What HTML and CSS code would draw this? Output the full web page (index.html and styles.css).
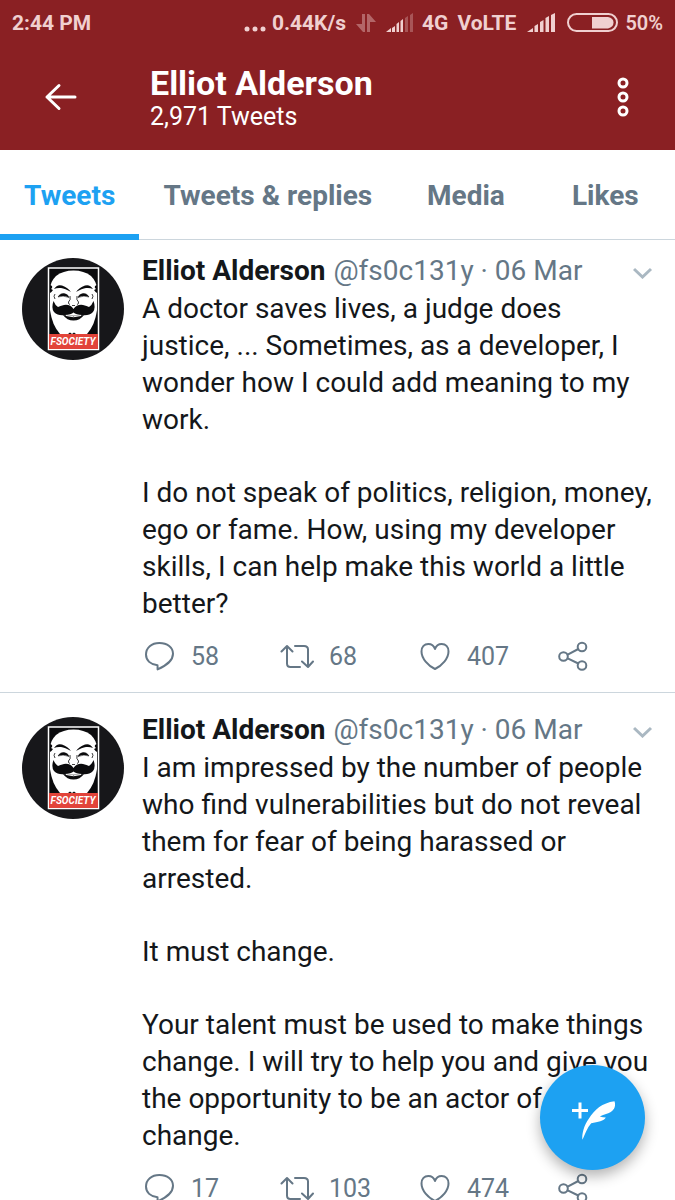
FILE: index.html
```html
<!DOCTYPE html>
<html lang="en">
<head>
    <meta charset="UTF-8">
    <meta name="viewport" content="width=device-width, initial-scale=1.0">
    <title>Elliot Alderson - Tweets</title>
    <link rel="stylesheet" href="styles.css">
</head>
<body>
    <!-- Shared icons -->
    <svg class="sprite" aria-hidden="true">
        <symbol id="icon-reply" viewBox="0 0 34 30">
            <path d="M15.5 24.2C8.5 23.6 4 19.500 4 13.600C4 6.800 9.500 2 17.400 2C25.300 2 31 6.600 31 12.800C31 20.300 24 24.600 15.600 28.400Z"/>
        </symbol>
        <symbol id="icon-retweet" viewBox="0 0 34 30">
            <path d="M1.500 10.500L7 5L12.500 10.500M7 5.500V22.500Q7 26 10.500 26H20M15 5H24Q28 5 28 8.500V25.500M22 20.500L28 26L33 20.500"/>
        </symbol>
        <symbol id="icon-like" viewBox="0 0 34 30">
            <path d="M17 28C10 24.500 3.500 17.500 3.500 10.500C3.500 5.800 6.500 3 10.300 3C13.500 3 16 5 17 8C18 5 20.500 3 23.700 3C27.500 3 30.500 5.800 30.500 10.500C30.500 17.500 24 24.500 17 28Z"/>
        </symbol>
        <symbol id="icon-share" viewBox="0 0 34 30">
            <path d="M11.700 13.700L22.300 8M11.700 17.300L22.300 22.500"/>
            <circle cx="7.500" cy="15.500" r="4.300"/>
            <circle cx="26" cy="6" r="4.300"/>
            <circle cx="26" cy="24.500" r="4.300"/>
        </symbol>
        <symbol id="icon-chevron" viewBox="0 0 20 14">
            <path d="M1 4L9.500 12L18 4"/>
        </symbol>
        <symbol id="mask" viewBox="0 0 102 102">
            <circle cx="51" cy="51" r="51" fill="#17171a"/>
            <rect x="26.500" y="10" width="50" height="81.500" fill="#0b0b0d" stroke="#fff" stroke-width="1.500"/>
            <path d="M28 37V30Q29 23 34 18Q41 12.500 51.500 12.500Q62 12.500 69 18Q74 23 75 30V52Q73 67 65 76H38Q30 67 28 52Z" fill="#fff"/>
            <path d="M28 27Q31 28 30 30Q28 31 31 32Q29 35 28 35ZM75 27Q72 28 73 30Q75 31 72 32Q74 35 75 35Z" fill="#0b0b0d"/>
            <path d="M32 31Q35 26 40 27.500Q46 29.500 49 34Q43 30.500 39 30Q35 29.500 32 31ZM71 31Q68 26 63 27.500Q57 29.500 54 34Q60 30.500 64 30Q68 29.500 71 31Z" fill="#0b0b0d"/>
            <path d="M36 39Q38 35 42 35.500Q46 36 47 39.500Q41 37 36 39ZM67 39Q65 35 61 35.500Q57 36 56 39.500Q62 37 67 39Z" fill="#0b0b0d" stroke="#0b0b0d" stroke-width="0.500"/>
            <path d="M48 38Q49 42 46.500 44Q46 46 48 46.500M55 38Q54 42 56.500 44Q57 46 55 46.500M33 36Q31 38 33 41M70 36Q72 38 70 41M50 47.500H53" fill="none" stroke="#0b0b0d" stroke-width="0.800"/>
            <path d="M51.500 51Q48 46 42 47Q38 48 36 49Q33 47 31.500 43Q29 50 32 54Q36 58 43 57Q49 56.500 51.500 54.500Q54 56.500 60 57Q67 58 71 54Q74 50 71.500 43Q70 47 67 49Q65 48 61 47Q55 46 51.500 51Z" fill="#0b0b0d"/>
            <path d="M41 57Q51.500 58.500 62 57Q58 62.500 51.500 62.500Q45 62.500 41 57Z" fill="#0b0b0d"/>
            <path d="M44 57.500Q51.500 60 59 57.500" fill="none" stroke="#fff"/>
            <path d="M46 76L48 74.500L50 76L52 74.500L54 76Z" fill="#0b0b0d"/>
            <rect x="27" y="76" width="49" height="15" fill="#e2443a"/>
        </symbol>
    </svg>

    <div class="app">
        <header class="topbar">
            <div class="status">
                <span class="clock">2:44 PM</span>
                <svg width="22" height="6" viewBox="0 0 22 6" class="dots"><circle cx="3" cy="3" r="2.500"/><circle cx="11" cy="3" r="2.500"/><circle cx="19" cy="3" r="2.500"/></svg>
                <span class="speed">0.44K/s</span>
                <svg width="20" height="20" viewBox="0 0 20 20" class="data"><path d="M6 1H9V19H7L0 11H6ZM11 1H13L20 9H14V19H11Z"/></svg>
                <svg width="28" height="20" viewBox="0 0 28 20" class="signal"><path d="M0 19L5 15V19ZM6 15L9 13V19H6ZM10.500 11L13 9V19H10.500ZM14.500 8L17 6V19H14.500Z"/><path class="off" d="M19 5L22 3V19H19ZM24 2L27 0V19H24Z"/></svg>
                <span>4G</span>
                <span class="volte">VoLTE</span>
                <svg width="28" height="20" viewBox="0 0 28 20" class="signal full"><path d="M0 19L6 15V19ZM7.500 13L11 11V19H7.500ZM13 9L16.500 7V19H13ZM18.500 5L22 3V19H18.500ZM24 2L28 0V19H24Z"/></svg>
                <svg width="51" height="20" viewBox="0 0 51 20" class="battery"><rect x="1" y="1" width="49" height="17" rx="8.500"/><path d="M25 4H41Q46.500 5 46.500 9.500Q46.500 14 41 15.500H25Z"/></svg>
                <span class="percent">50%</span>
            </div>
            <div class="profile">
                <button type="button" class="back" aria-label="Back">
                    <svg width="34" height="28" viewBox="0 0 34 28"><path d="M15 2.500L3 14L15 25.500M3 14H31"/></svg>
                </button>
                <div class="profile-text">
                    <h1>Elliot Alderson</h1>
                    <p>2,971 Tweets</p>
                </div>
                <button type="button" class="more" aria-label="More options">
                    <svg width="12" height="40" viewBox="0 0 12 40"><circle cx="6" cy="6" r="4"/><circle cx="6" cy="20" r="4"/><circle cx="6" cy="34" r="4"/></svg>
                </button>
            </div>
        </header>

        <nav class="tabs">
            <a href="#tweets" class="active">Tweets</a>
            <a href="#replies">Tweets &amp; replies</a>
            <a href="#media">Media</a>
            <a href="#likes">Likes</a>
        </nav>

        <main class="feed">
            <article class="tweet">
                <svg class="avatar">
                    <use href="#mask"/>
                    <text x="51" y="87" text-anchor="middle">FSOCIETY</text>
                </svg>
                <div class="content">
                    <div class="byline">
                        <h2>Elliot Alderson</h2>
                        <span>@fs0c131y · 06 Mar</span>
                        <button type="button" class="menu" aria-label="Tweet menu"><svg><use href="#icon-chevron"/></svg></button>
                    </div>
                    <div class="text">
                        <p>A doctor saves lives, a judge does justice, ... Sometimes, as a developer, I wonder how I could add meaning to my work.</p>
                        <p>I do not speak of politics, religion, money, ego or fame. How, using my developer skills, I can help make this world a little better?</p>
                    </div>
                    <div class="actions">
                        <button type="button" aria-label="Reply"><svg><use href="#icon-reply"/></svg>58</button>
                        <button type="button" aria-label="Retweet"><svg><use href="#icon-retweet"/></svg>68</button>
                        <button type="button" aria-label="Like"><svg><use href="#icon-like"/></svg>407</button>
                        <button type="button" aria-label="Share"><svg><use href="#icon-share"/></svg></button>
                    </div>
                </div>
            </article>

            <article class="tweet">
                <svg class="avatar">
                    <use href="#mask"/>
                    <text x="51" y="87" text-anchor="middle">FSOCIETY</text>
                </svg>
                <div class="content">
                    <div class="byline">
                        <h2>Elliot Alderson</h2>
                        <span>@fs0c131y · 06 Mar</span>
                        <button type="button" class="menu" aria-label="Tweet menu"><svg><use href="#icon-chevron"/></svg></button>
                    </div>
                    <div class="text">
                        <p>I am impressed by the number of people who find vulnerabilities but do not reveal them for fear of being harassed or arrested.</p>
                        <p>It must change.</p>
                        <p>Your talent must be used to make things change. I will try to help you and give you the opportunity to be an actor of<br>change.</p>
                    </div>
                    <div class="actions">
                        <button type="button" aria-label="Reply"><svg><use href="#icon-reply"/></svg>17</button>
                        <button type="button" aria-label="Retweet"><svg><use href="#icon-retweet"/></svg>103</button>
                        <button type="button" aria-label="Like"><svg><use href="#icon-like"/></svg>474</button>
                        <button type="button" aria-label="Share"><svg><use href="#icon-share"/></svg></button>
                    </div>
                </div>
            </article>
        </main>

        <button type="button" class="compose" aria-label="Compose tweet">
            <svg width="46" height="46" viewBox="0 0 46 46">
                <path d="M2 15.500H18M10 7.500V23.500" class="plus"/>
                <path d="M12.500 44.800C11.500 40 14 30 18.800 23.800C25 14 32 8 44.500 6.200C45.500 9 45 12 44 13.800C42 17 39 18 36 19Q32 20 29.800 21.500Q33 22.500 35.800 22.500C34 26 28 27 21.200 28.200C17 33 15 39 12.500 44.800Z" class="feather"/>
            </svg>
        </button>
    </div>
</body>
</html>
```
FILE: styles.css
```css
* {
    box-sizing: border-box;
}
body {
    margin: 0;
    font-family: Roboto, "Liberation Sans", sans-serif;
    background: #fff;
    color: #14171a;
}
h1, h2, p {
    margin: 0;
}
button {
    padding: 0;
    border: none;
    background: none;
    font: inherit;
    color: inherit;
    cursor: pointer;
}
svg {
    display: block;
    flex-shrink: 0;
}
.sprite {
    position: absolute;
    width: 0;
    height: 0;
}
.app {
    height: 100vh;
    overflow: hidden;
}

/* Status bar and profile header */
.topbar {
    height: 150px;
    background: #8a2023;
    color: #fff;
}
.status {
    display: flex;
    align-items: center;
    height: 46px;
    padding: 0 12px;
    font-size: 21px;
    font-weight: bold;
    color: #f0d0d0;
    fill: #f0d0d0;
}
.clock {
    margin-right: auto;
}
.dots {
    margin: 12px 6px 0 0;
}
.speed {
    margin-right: 10px;
}
.data {
    margin-right: 10px;
    opacity: 0.4;
}
.signal {
    margin-right: 8px;
}
.signal.full {
    margin-right: 12px;
}
.signal .off {
    opacity: 0.3;
}
.volte {
    margin: 0 11px 0 9px;
}
.battery {
    margin-right: 7px;
}
.battery rect {
    fill: none;
    stroke: #f0d0d0;
    stroke-width: 2;
}
.percent {
    font-size: 20px;
    font-weight: 600;
}
.profile {
    display: flex;
    align-items: center;
    height: 102px;
    padding: 0 46px 0 44px;
}
.profile svg {
    fill: none;
    stroke: #fff;
    stroke-width: 3;
    stroke-linecap: round;
    stroke-linejoin: round;
}
.profile-text {
    flex: 1;
    margin-left: 72px;
    padding-top: 4px;
}
h1 {
    font-size: 34px;
    line-height: 36px;
}
.profile-text p {
    font-size: 25px;
    line-height: 32px;
}

/* Tabs */
.tabs {
    display: flex;
    height: 90px;
    border-bottom: 1px solid #ccd6dd;
}
.tabs a {
    flex: 1;
    padding: 0 24px;
    font-size: 28px;
    font-weight: bold;
    line-height: 92px;
    text-align: center;
    white-space: nowrap;
    color: #657786;
    text-decoration: none;
}
.tabs .active {
    height: 90px;
    color: #1da1f2;
    border-bottom: 6px solid #1da1f2;
}

/* Tweets */
.tweet {
    display: flex;
    gap: 18px;
    padding: 24px 22px 18px;
    border-bottom: 1px solid #ccd6dd;
}
.tweet:first-child {
    padding-top: 18px;
}
.avatar {
    width: 102px;
    height: 102px;
}
.avatar text {
    font-size: 10px;
    font-weight: bold;
    font-style: italic;
    fill: #fff;
}
.content {
    flex: 1;
    min-width: 0;
}
.byline {
    display: flex;
    align-items: center;
    gap: 8px;
    height: 32px;
    margin: -4px 0 4px;
    font-size: 28px;
    white-space: nowrap;
    color: #657786;
}
h2 {
    font-size: 28px;
    color: #14171a;
}
.menu {
    margin-left: auto;
    padding-top: 4px;
}
.menu svg {
    width: 20px;
    height: 14px;
    fill: none;
    stroke: #aab8c2;
    stroke-width: 3;
}
.text {
    font-size: 28px;
    line-height: 37px;
}
.text p + p {
    margin-top: 36px;
}
.actions {
    display: grid;
    grid-template-columns: repeat(3, 1fr) 97px;
    margin-top: 16px;
    font-size: 25px;
    color: #657786;
}
.actions button {
    display: flex;
    align-items: center;
    gap: 15px;
    height: 36px;
}
.actions svg {
    width: 34px;
    height: 30px;
    fill: none;
    stroke: #657786;
    stroke-width: 2;
    stroke-linecap: round;
    stroke-linejoin: round;
}

/* Floating compose button */
.compose {
    position: fixed;
    right: 30px;
    bottom: 30px;
    display: flex;
    align-items: center;
    justify-content: center;
    width: 105px;
    height: 105px;
    border-radius: 50%;
    background: #1da1f2;
    box-shadow: 0 6px 14px rgba(0,0,0,0.3);
}
.plus {
    stroke: #fff;
    stroke-width: 3;
}
.feather {
    fill: #fff;
}
```
